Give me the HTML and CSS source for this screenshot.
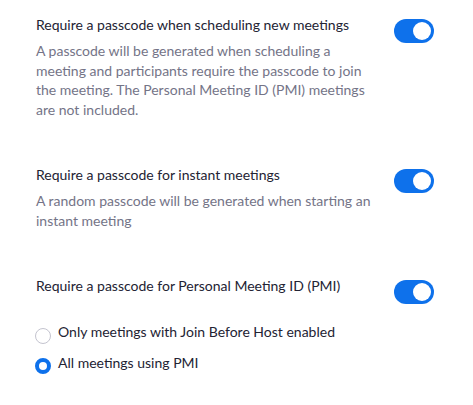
FILE: index.html
```html
<!DOCTYPE html>
<html>
<head>
<meta charset="utf-8">
<link rel="stylesheet" href="styles.css">
</head>
<body>
<div class="settings">
  <div class="setting">
    <div class="text">
      <div class="title">Require a passcode when scheduling new meetings</div>
      <div class="desc">A passcode will be generated when scheduling a meeting and participants require the passcode to join the meeting. The Personal Meeting ID (PMI) meetings are not included.</div>
    </div>
    <div class="toggle"><span class="knob"></span></div>
  </div>
  <div class="setting">
    <div class="text">
      <div class="title">Require a passcode for instant meetings</div>
      <div class="desc">A random passcode will be generated when starting an instant meeting</div>
    </div>
    <div class="toggle"><span class="knob"></span></div>
  </div>
  <div class="setting">
    <div class="text">
      <div class="title">Require a passcode for Personal Meeting ID (PMI)</div>
      <div class="options">
        <label class="option"><span class="radio"></span>Only meetings with Join Before Host enabled</label>
        <label class="option"><span class="radio checked"></span>All meetings using PMI</label>
      </div>
    </div>
    <div class="toggle"><span class="knob"></span></div>
  </div>
</div>
</body>
</html>
```
FILE: styles.css
```css
html, body {
  margin: 0;
  padding: 0;
  background: #ffffff;
}
body {
  font-family: Lato, "Open Sans", sans-serif;
  font-size: 14px;
}
.settings {
  padding: 15px 0 0 36px;
  display: flex;
  flex-direction: column;
  gap: 46px;
}
.setting {
  display: flex;
  align-items: flex-start;
}
.text {
  width: 340px;
}
.title {
  color: #232333;
  line-height: 19px;
}
.desc {
  color: #747487;
  line-height: 19.5px;
  margin-top: 7px;
}
.toggle {
  margin-left: 18px;
  margin-top: 4px;
  width: 40px;
  height: 24px;
  border-radius: 12px;
  background: #0e71eb;
  display: flex;
  align-items: center;
  justify-content: flex-end;
  padding-right: 3px;
  box-sizing: border-box;
}
.knob {
  width: 18px;
  height: 18px;
  border-radius: 50%;
  background: #ffffff;
}
.options {
  margin-top: 27px;
  margin-left: -1px;
  display: flex;
  flex-direction: column;
  gap: 9px;
}
.option {
  display: flex;
  align-items: flex-start;
  color: #232333;
  line-height: 19px;
}
.radio {
  width: 16px;
  height: 16px;
  box-sizing: border-box;
  border-radius: 50%;
  border: 1px solid #c4c4cf;
  margin-right: 7px;
  margin-top: 5.5px;
  flex-shrink: 0;
}
.radio.checked {
  border: 4.5px solid #0e71eb;
}
```
